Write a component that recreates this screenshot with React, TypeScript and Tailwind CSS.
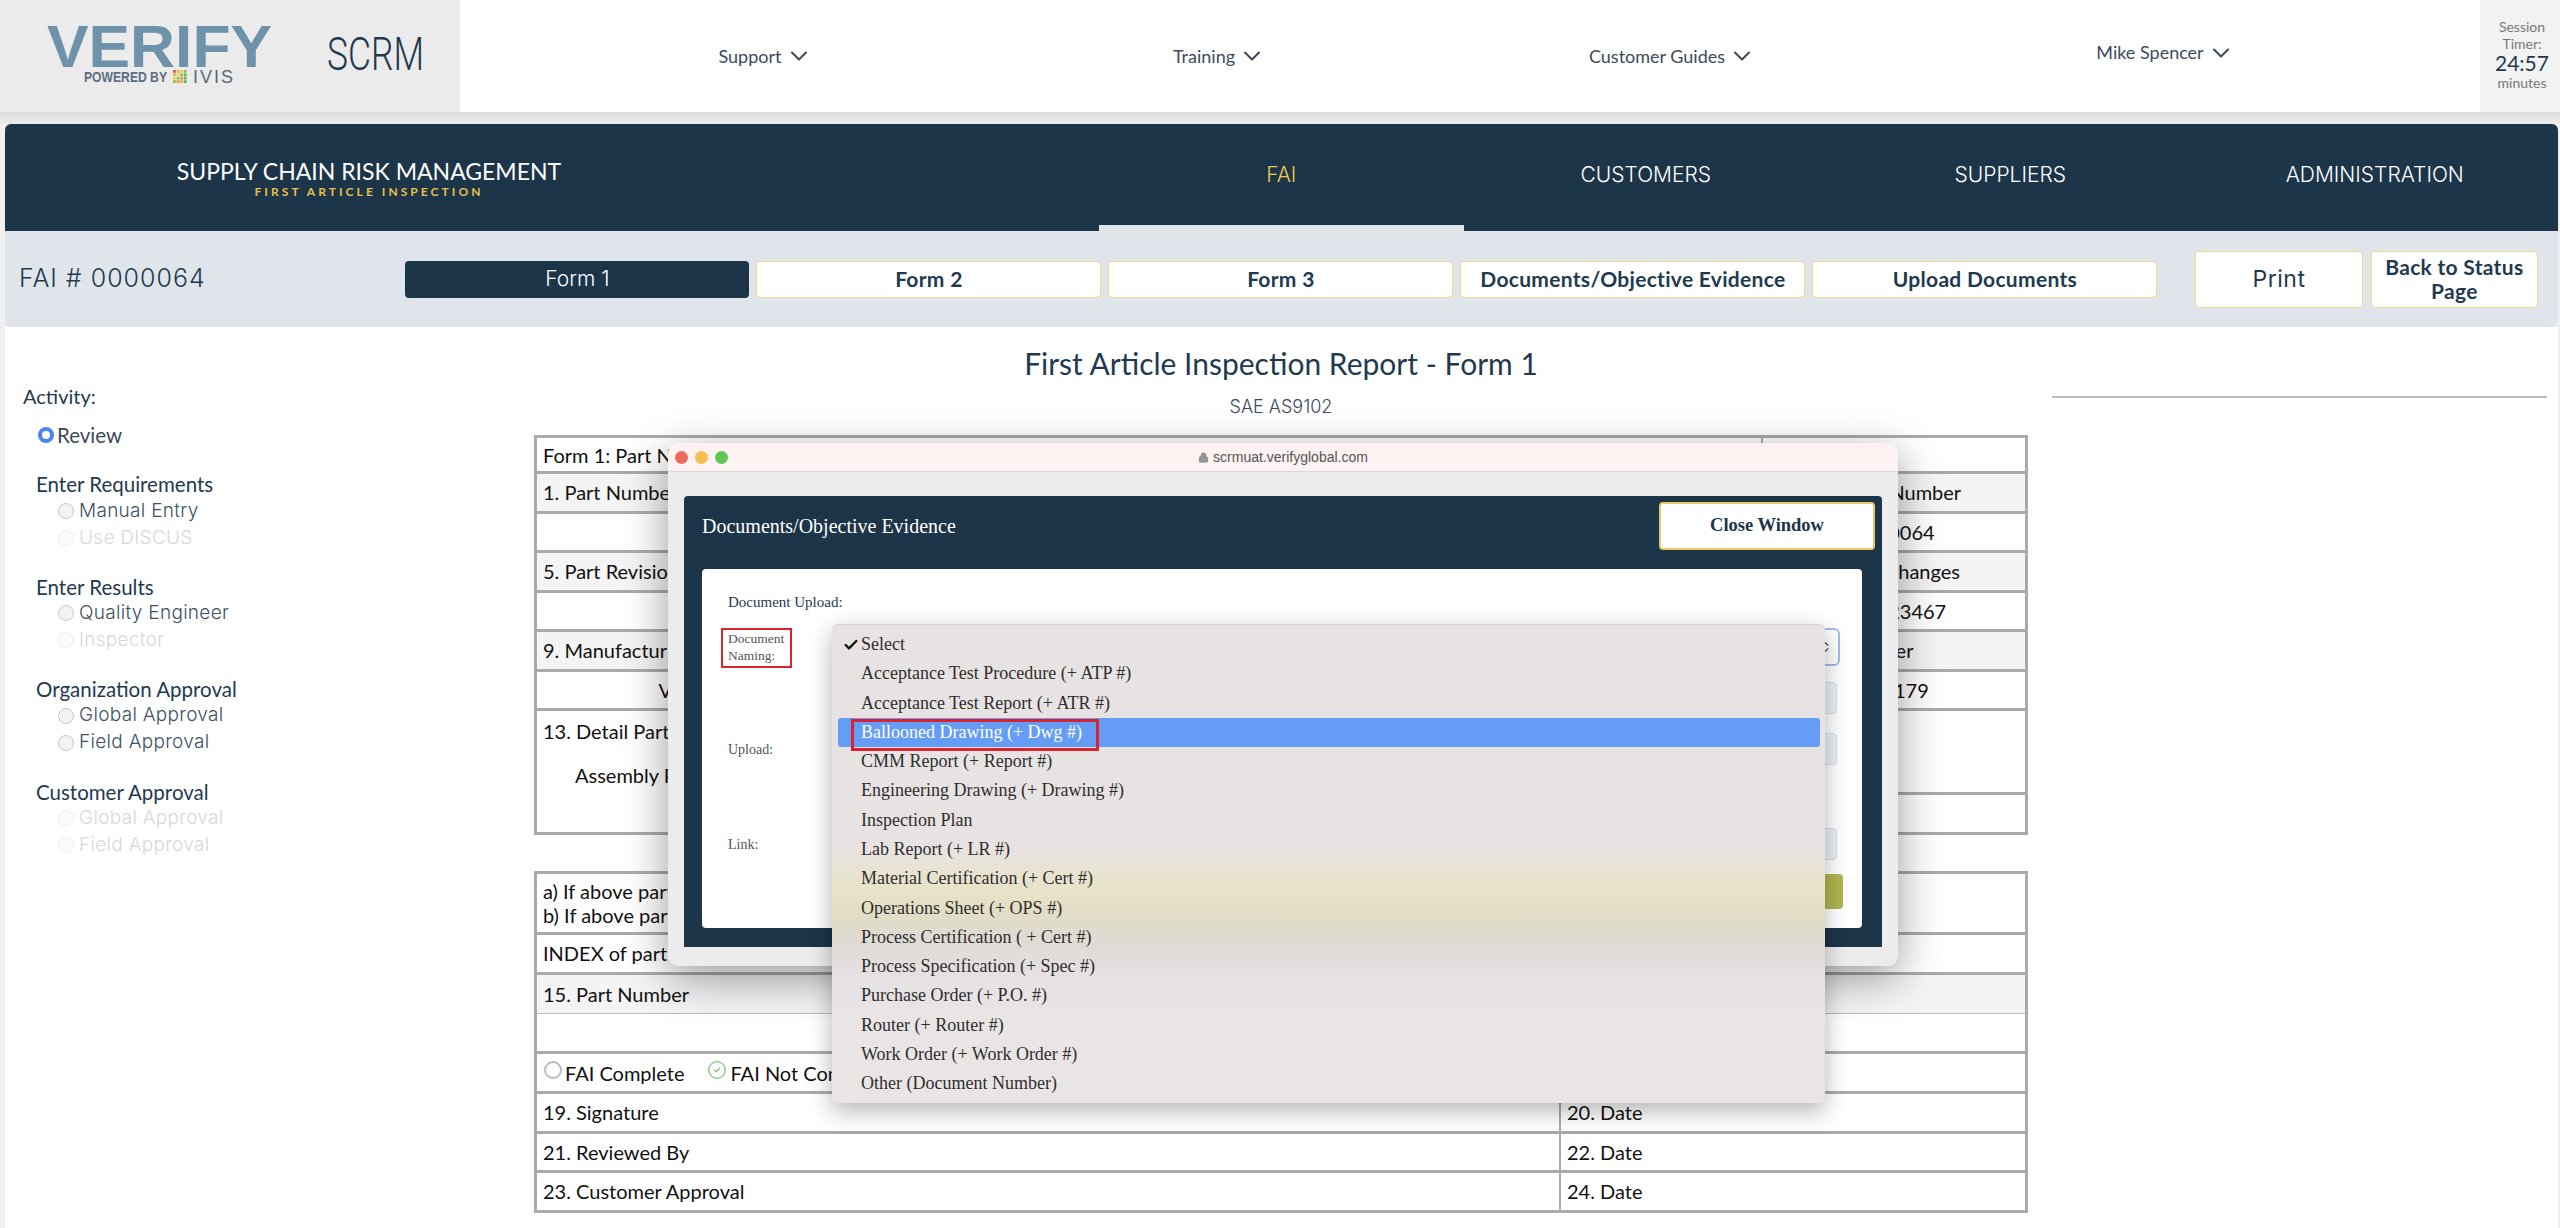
import { Check, ChevronDown, ChevronsUpDown, CircleCheck, Lock } from 'lucide-react';

const navItems = [
  { label: 'Support', width: 'w-[455px]', offset: '' },
  { label: 'Training', width: 'w-[453px]', offset: '' },
  { label: 'Customer Guides', width: 'w-[453px]', offset: '' },
  { label: 'Mike Spencer', width: 'w-[533px]', offset: 'mb-[7px]' },
];

const tabs = ['FAI', 'CUSTOMERS', 'SUPPLIERS', 'ADMINISTRATION'];
const forms = ['Form 2', 'Form 3', 'Documents/Objective Evidence', 'Upload Documents'];

const activity = [
  { title: 'Enter Requirements', items: [{ label: 'Manual Entry' }, { label: 'Use DISCUS', off: true }] },
  { title: 'Enter Results', items: [{ label: 'Quality Engineer' }, { label: 'Inspector', off: true }] },
  { title: 'Organization Approval', items: [{ label: 'Global Approval' }, { label: 'Field Approval' }] },
  { title: 'Customer Approval', items: [{ label: 'Global Approval', off: true }, { label: 'Field Approval', off: true }] },
];

const docTypes = [
  'Select',
  'Acceptance Test Procedure (+ ATP #)',
  'Acceptance Test Report (+ ATR #)',
  'Ballooned Drawing (+ Dwg #)',
  'CMM Report (+ Report #)',
  'Engineering Drawing (+ Drawing #)',
  'Inspection Plan',
  'Lab Report (+ LR #)',
  'Material Certification (+ Cert #)',
  'Operations Sheet (+ OPS #)',
  'Process Certification ( + Cert #)',
  'Process Specification (+ Spec #)',
  'Purchase Order (+ P.O. #)',
  'Router (+ Router #)',
  'Work Order (+ Work Order #)',
  'Other (Document Number)',
];

const formRows = [
  { cells: ['1. Part Number', '2. Part Name', '3. Serial Number', '4. FAI Report Number'], label: true },
  { cells: ['', '', '', '0000064'] },
  { cells: ['5. Part Revision Level', '6. Drawing Number', '7. Drawing Revision Level', '8. Additional Changes'], label: true },
  { cells: ['', '', '', '000123467'] },
  { cells: ['9. Manufacturing Process Reference', '10. Organization Name', '11. Supplier Code', '12. P.O. Number'], label: true },
  { cells: ['Verify Global Corp.', '', '', '100179'] },
];

const logoColors = ['#d9534f', '#f0ad4e', '#f0d04e', '#8cc152', '#f0ad4e', '#f0d04e', '#8cc152', '#5cb85c', '#f0d04e', '#8cc152', '#d9a13b', '#5cb85c', '#8cc152', '#d9a13b', '#f0ad4e', '#5cb85c'];

function Radio({ off }: { off?: boolean }) {
  return <span className={`ml-[1px] mr-[5px] h-[16px] w-[16px] shrink-0 rounded-full border ${off ? 'border-[#eeeeee] bg-[#fbfbfb]' : 'border-[#c9c9c9] bg-[#f3f3f3]'}`} />;
}

export default function App() {
  return (
    <div className="relative h-[1228px] w-[2560px] overflow-hidden bg-[#f0f0f0] font-['Lato',sans-serif] text-[#1f3a50]">
      {/* top header */}
      <header className="flex h-[112px] bg-white">
        <div className="flex w-[460px] items-start bg-[#ebebeb] pl-[47px] pt-[10px]">
          <svg width="280" height="80" viewBox="0 0 280 80">
            <text x="0" y="57" fontFamily="Liberation Sans" fontWeight="700" fontSize="60" fill="#6f92ab" textLength="225" lengthAdjust="spacingAndGlyphs">VERIFY</text>
            <text x="37" y="72" fontFamily="Liberation Sans" fontWeight="700" fontSize="15" fill="#5d6e82" textLength="83" lengthAdjust="spacingAndGlyphs">POWERED BY</text>
            {logoColors.map((c, i) => (
              <rect key={i} x={126 + (i % 4) * 3.6} y={60 + Math.floor(i / 4) * 3.4} width="2.8" height="2.8" fill={c} />
            ))}
            <text x="146" y="73" fontFamily="Liberation Sans" fontWeight="400" fontSize="18" fill="#56687d" textLength="40" lengthAdjust="spacing">IVIS</text>
          </svg>
          <svg className="mt-[13px]" width="110" height="60" viewBox="0 0 110 60">
            <text x="0" y="47" fontFamily="Roboto" fontWeight="300" fontSize="46" fill="#1f3a50" textLength="97" lengthAdjust="spacingAndGlyphs">SCRM</text>
          </svg>
        </div>
        <nav className="flex flex-1 pl-[78px]">
          {navItems.map((item) => (
            <div key={item.label} className={`flex items-center justify-center ${item.width}`}>
              <span className={`flex items-center gap-[3px] text-[18px] text-[#3d4a5c] ${item.offset}`}>
                {item.label}
                <ChevronDown size={28} strokeWidth={1.75} />
              </span>
            </div>
          ))}
        </nav>
        <div className="flex w-[80px] flex-col items-center bg-[#f2f2f2] pl-[4px] pt-[18px] text-center text-[14px] leading-[17px] text-[#777777]">
          <span>Session</span>
          <span>Timer:</span>
          <span className="text-[21px] leading-[22px] text-[#1f3a50]">24:57</span>
          <span>minutes</span>
        </div>
      </header>
      <div className="h-[12px] bg-[linear-gradient(#d9d9d9,#eeeeee)]" />

      <div className="ml-[5px] mr-[2px]">
        {/* navy module bar */}
        <div className="flex h-[107px] rounded-t-[6px] bg-[#1c3549] text-white">
          <div className="flex w-[1094px] pr-[366px]">
            <div className="flex w-full flex-col items-center pt-[33px]">
              <span className="text-[23px] leading-[29px]">SUPPLY CHAIN RISK MANAGEMENT</span>
              <span className="text-[12px] font-bold leading-[12px] tracking-[3.05px] text-[#e8c04a]">FIRST ARTICLE INSPECTION</span>
            </div>
          </div>
          {tabs.map((tab, i) => (
            <div key={tab} className={`flex w-[364.5px] items-center justify-center font-['Inter',sans-serif] text-[21px] font-light ${i === 0 ? 'border-b-[6px] border-[#dfe5eb] text-[#f0c94a]' : 'pb-[6px]'}`}>
              {tab}
            </div>
          ))}
        </div>

        {/* form tabs */}
        <div className="flex h-[96px] items-center rounded-b-[6px] bg-[#dfe5eb] pl-[14px] pr-[20px]">
          <span className="w-[388px] font-['Inter',sans-serif] text-[25px] font-light tracking-[1px] text-[#1f3a50]">FAI # 0000064</span>
          <div className="flex gap-[7px]">
            <button className="h-[37px] w-[344px] rounded-[4px] bg-[#1c3549] font-['Inter',sans-serif] text-[21px] font-light text-white">Form 1</button>
            {forms.map((form) => (
              <button key={form} className="h-[37px] w-[345px] rounded-[4px] border border-[#f0d98f] bg-white text-[21px] font-bold tracking-[0.3px]">{form}</button>
            ))}
          </div>
          <button className="ml-[38px] h-[57px] w-[168px] rounded-[4px] border border-[#f0d98f] bg-white font-['Inter',sans-serif] text-[23px] tracking-[0.5px]">Print</button>
          <button className="ml-[8px] h-[57px] w-[168px] rounded-[4px] border border-[#f0d98f] bg-white text-[21px] font-bold leading-[24px] tracking-[0.3px]">Back to Status Page</button>
        </div>

        <main className="flex h-[901px] bg-white">
          {/* activity sidebar */}
          <aside className="w-[529px] pl-[18px] pt-[55px]">
            <div className="h-[28px] text-[20px] leading-[28px]">Activity:</div>
            <div className="ml-[15px] mt-[11px] flex h-[28px] items-center text-[20.5px] text-[#3d4a5c]">
              <span className="mr-[3px] h-[16px] w-[16px] rounded-full border-[4px] border-[#4a86f0] bg-white" />
              Review
            </div>
            {activity.map((group) => (
              <div key={group.title} className="mt-[23.4px] pl-[13px] first-of-type:mt-[24px]">
                <div className="h-[25px] text-[20.5px] leading-[24px]">{group.title}</div>
                {group.items.map((item) => (
                  <div key={item.label} className={`flex h-[27px] items-center pl-[21px] font-['Inter',sans-serif] text-[19px] font-light tracking-[0.3px] ${item.off ? 'text-[#d8d8d8]' : 'text-[#3d5164]'}`}>
                    <Radio off={item.off} />
                    {item.label}
                  </div>
                ))}
              </div>
            ))}
          </aside>

          {/* report form */}
          <section className="w-[1494px] text-[20px] text-[#111111]">
            <h1 className="mt-[15px] h-[42px] text-center text-[30px] leading-[42px] text-[#1f3a50]">First Article Inspection Report - Form 1</h1>
            <p className="mt-[11px] h-[24px] text-center font-['Inter',sans-serif] text-[18px] font-light leading-[24px] text-[#3d4a5c]">SAE AS9102</p>
            <div className="mt-[16px] border-[3px] border-b-0 border-[#aaaaaa]">
              <div className="flex h-[36px] items-center border-b-[3px] border-[#aaaaaa]">
                <div className="flex h-full w-[1226px] items-center border-r-2 border-[#aaaaaa] pl-[6px]">Form 1: Part Number Accountability</div>
              </div>
              {formRows.map((row, i) => (
                <div key={i} className={`grid h-[39.5px] grid-cols-[409px_409px_408px_1fr] border-b-[3px] border-[#aaaaaa] ${row.label ? 'bg-[#f4f4f4]' : 'bg-white'}`}>
                  {row.cells.map((cell, j) => (
                    <div key={j} className={`truncate leading-[37px] ${row.label ? 'pl-[6px]' : 'text-center'}`}>{cell}</div>
                  ))}
                </div>
              ))}
              <div className="flex h-[124px] border-b-[3px] border-[#aaaaaa]">
                <div className="w-[1226px] pl-[6px] pt-[5px] leading-[30px]">
                  <div>13. Detail Part Number</div>
                  <div className="mt-[14px] pl-[32px]">Assembly Part Number</div>
                </div>
                <div className="flex flex-1 flex-col">
                  <div className="h-[84px] border-b-[3px] border-[#aaaaaa]" />
                </div>
              </div>
            </div>

            <div className="mt-[36px] border-[3px] border-b-0 border-[#aaaaaa]">
              <div className="h-[61px] border-b-[3px] border-[#aaaaaa] pl-[6px] pt-[5px] leading-[24px]">
                <div>a) If above part number is a detail part only, go to Field 19</div>
                <div>b) If above part number is an assembly, go to the "INDEX" section below.</div>
              </div>
              <div className="h-[40px] border-b-[3px] border-[#aaaaaa] pl-[6px] leading-[36px]">INDEX of part numbers or part numbers associated with any sub-assemblies</div>
              <div className="h-[39px] border-b border-[#bbbbbb] bg-[#f4f4f4] pl-[6px] leading-[38px]">15. Part Number</div>
              <div className="h-[40px] border-b-[3px] border-[#aaaaaa]" />
              <div className="flex h-[40px] items-center border-b-[3px] border-[#aaaaaa] pl-[7px]">
                <span className="mb-[6px] mr-[3px] h-[18px] w-[18px] rounded-full border-2 border-[#bbbbbb]" />
                FAI Complete
                <CircleCheck size={20} strokeWidth={1.6} className="mb-[6px] ml-[23px] mr-[3px] text-[#7cc47f]" />
                FAI Not Complete
              </div>
              {[['19. Signature', '20. Date'], ['21. Reviewed By', '22. Date'], ['23. Customer Approval', '24. Date']].map(([left, right]) => (
                <div key={left} className="flex h-[39.7px] border-b-[3px] border-[#aaaaaa] leading-[36px]">
                  <div className="w-[1024px] border-r-2 border-[#aaaaaa] pl-[6px]">{left}</div>
                  <div className="pl-[6px]">{right}</div>
                </div>
              ))}
            </div>
          </section>

          <div className="ml-[24px] mt-[69px] h-[2px] w-[495px] bg-[#bbbbbb]" />
        </main>
      </div>

      {/* popup browser window */}
      <div className="absolute left-[668px] top-[443px] h-[523px] w-[1230px] overflow-hidden rounded-[10px] bg-[#ececec] shadow-[0_12px_45px_rgba(0,0,0,0.4)]">
        <div className="relative flex h-[29px] items-center justify-center border-b border-[#d9d9d9] bg-[#fdf2f2] text-[14px] text-[#555555]">
          <span className="absolute left-[7px] flex gap-[7px]">
            <span className="h-[13px] w-[13px] rounded-full bg-[#ec6a5e]" />
            <span className="h-[13px] w-[13px] rounded-full bg-[#f4bf4f]" />
            <span className="h-[13px] w-[13px] rounded-full bg-[#61c554]" />
          </span>
          <Lock size={11} className="mr-[4px] text-[#888888]" fill="#999999" />
          <span className="font-['Liberation_Sans',sans-serif]">scrmuat.verifyglobal.com</span>
        </div>
        <div className="mx-[16px] mt-[24px] h-[451px] rounded-t-[4px] bg-[#1c3549] font-['Liberation_Serif',serif]">
          <div className="flex h-[73px] items-start justify-between pl-[18px] pr-[7px] pt-[6px]">
            <span className="flex h-[48px] items-center text-[20px] text-white">Documents/Objective Evidence</span>
            <button className="h-[48px] w-[216px] rounded-[4px] border-2 border-[#e8c766] bg-white text-[18.5px] font-bold text-[#1c3549]">Close Window</button>
          </div>
          <div className="ml-[18px] mr-[20px] h-[359px] rounded-[4px] bg-white pl-[26px] pr-[22px] pt-[23px] text-[14px] text-[#555555]">
            <div className="h-[20px] text-[15px] leading-[20px] text-[#1f3a50]">Document Upload:</div>
            <div className="mt-[16px] flex h-[38px]">
              <div className="-ml-[7px] h-[40px] w-[71px] border-2 border-[#d9232e] pl-[5px] text-[13.5px] leading-[17px]">Document Naming:</div>
              <div className="ml-[54px] flex flex-1 items-center justify-end rounded-[6px] border-2 border-[#9dbdf0] pr-[6px]">
                <ChevronsUpDown size={14} className="text-[#444444]" />
              </div>
            </div>
            <div className="ml-[118px] mr-[3px] mt-[16px] h-[32px] rounded-[4px] border border-[#d5dfe8] bg-[#eaf1f7]" />
            <div className="mt-[19px] flex h-[32px]">
              <div className="flex w-[118px] items-center">Upload:</div>
              <div className="mr-[3px] flex-1 rounded-[4px] border border-[#d5dfe8] bg-[#eaf1f7]" />
            </div>
            <div className="mt-[63px] flex h-[32px]">
              <div className="flex w-[118px] items-center">Link:</div>
              <div className="mr-[3px] flex-1 rounded-[4px] border border-[#d5dfe8] bg-[#eaf1f7]" />
            </div>
            <div className="-mr-[3px] ml-[118px] mt-[14px] h-[35px] rounded-[4px] bg-[#b0b54e]" />
          </div>
        </div>
      </div>

      {/* open select menu */}
      <ul className="absolute left-[832px] top-[624px] h-[479px] w-[993px] rounded-[6px] border-t border-[#d6d2d2] bg-[linear-gradient(#e8e3e3_0%,#e8e3e3_46%,#e8e3c8_55%,#e2ddc4_60%,#dedbd6_67%,#e6e0e2_73%,#e9e5e5_82%,#e9e5e5_100%)] pt-[5px] font-['Liberation_Serif',serif] text-[18px] text-[#2e2e2e] shadow-[0_8px_24px_rgba(0,0,0,0.3)]">
        {docTypes.map((doc, i) =>
          i === 3 ? (
            <li key={doc} className="relative ml-[6px] mr-[5px] flex h-[29.27px] items-center rounded-[3px] bg-[#659df6] pl-[23px] text-white">
              {doc}
              <span className="absolute left-[13px] top-[1px] h-[32px] w-[248px] border-[3px] border-[#d9232e]" />
            </li>
          ) : (
            <li key={doc} className="flex h-[29.27px] items-center pl-[29px]">
              {i === 0 && <Check size={16} strokeWidth={3.5} className="-ml-[18px] mr-[2px] text-[#111111]" />}
              {doc}
            </li>
          ),
        )}
      </ul>
    </div>
  );
}
